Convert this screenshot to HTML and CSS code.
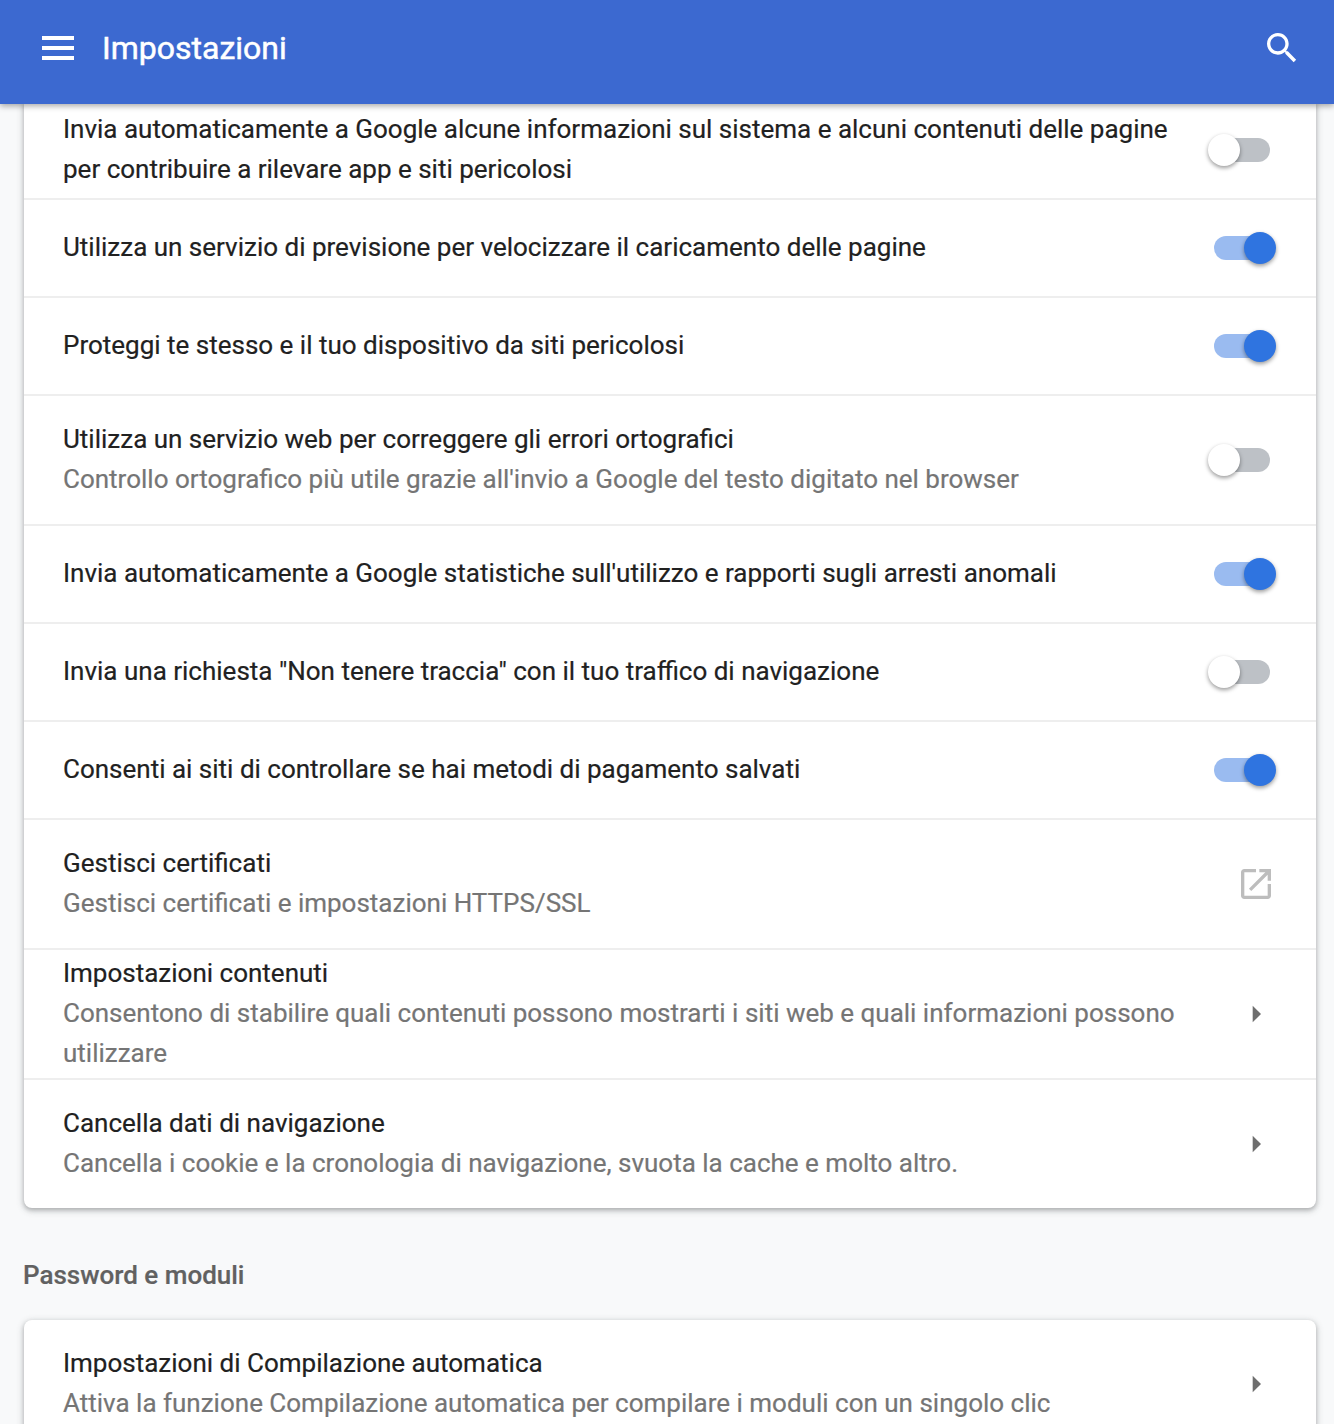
FILE: index.html
```html
<!DOCTYPE html>
<html lang="it">
<head>
<meta charset="utf-8">
<title>Impostazioni</title>
<link rel="stylesheet" href="styles.css">
</head>
<body>
<header class="topbar">
  <button class="menu" aria-label="Menu"><span></span><span></span><span></span></button>
  <h1 class="title">Impostazioni</h1>
  <svg class="icon search" viewBox="0 0 24 24"><path d="M15.5 14h-.79l-.28-.27C15.41 12.59 16 11.11 16 9.5 16 5.91 13.09 3 9.5 3S3 5.91 3 9.5 5.91 16 9.5 16c1.61 0 3.09-.59 4.23-1.57l.27.28v.79l5 4.99L20.49 19l-4.99-5zm-6 0C7.01 14 5 11.99 5 9.5S7.01 5 9.5 5 14 7.01 14 9.5 11.99 14 9.5 14z"/></svg>
</header>
<main class="page">
  <section class="card card-first">
    <div class="row row-first">
      <div class="text"><div class="label">Invia automaticamente a Google alcune informazioni sul sistema e alcuni contenuti delle pagine per contribuire a rilevare app e siti pericolosi</div></div>
      <div class="toggle"><span class="track"></span><span class="knob"></span></div>
    </div>
    <div class="row">
      <div class="text"><div class="label">Utilizza un servizio di previsione per velocizzare il caricamento delle pagine</div></div>
      <div class="toggle on"><span class="track"></span><span class="knob"></span></div>
    </div>
    <div class="row">
      <div class="text"><div class="label">Proteggi te stesso e il tuo dispositivo da siti pericolosi</div></div>
      <div class="toggle on"><span class="track"></span><span class="knob"></span></div>
    </div>
    <div class="row row-tall">
      <div class="text"><div class="label">Utilizza un servizio web per correggere gli errori ortografici</div><div class="sub">Controllo ortografico più utile grazie all'invio a Google del testo digitato nel browser</div></div>
      <div class="toggle"><span class="track"></span><span class="knob"></span></div>
    </div>
    <div class="row">
      <div class="text"><div class="label">Invia automaticamente a Google statistiche sull'utilizzo e rapporti sugli arresti anomali</div></div>
      <div class="toggle on"><span class="track"></span><span class="knob"></span></div>
    </div>
    <div class="row">
      <div class="text"><div class="label">Invia una richiesta "Non tenere traccia" con il tuo traffico di navigazione</div></div>
      <div class="toggle"><span class="track"></span><span class="knob"></span></div>
    </div>
    <div class="row">
      <div class="text"><div class="label">Consenti ai siti di controllare se hai metodi di pagamento salvati</div></div>
      <div class="toggle on"><span class="track"></span><span class="knob"></span></div>
    </div>
    <div class="row row-tall">
      <div class="text"><div class="label">Gestisci certificati</div><div class="sub">Gestisci certificati e impostazioni HTTPS/SSL</div></div>
      <svg class="icon external" viewBox="0 0 24 24"><path d="M19 19H5V5h7V3H5c-1.11 0-2 .9-2 2v14c0 1.1.89 2 2 2h14c1.1 0 2-.9 2-2v-7h-2v7zM14 3v2h3.59l-9.83 9.83 1.41 1.41L19 6.41V10h2V3h-7z"/></svg>
    </div>
    <div class="row row-tall">
      <div class="text"><div class="label">Impostazioni contenuti</div><div class="sub">Consentono di stabilire quali contenuti possono mostrarti i siti web e quali informazioni possono utilizzare</div></div>
      <svg class="icon arrow" viewBox="0 0 24 24"><path d="M10 17l5-5-5-5v10z"/></svg>
    </div>
    <div class="row row-tall">
      <div class="text"><div class="label">Cancella dati di navigazione</div><div class="sub">Cancella i cookie e la cronologia di navigazione, svuota la cache e molto altro.</div></div>
      <svg class="icon arrow" viewBox="0 0 24 24"><path d="M10 17l5-5-5-5v10z"/></svg>
    </div>
  </section>
  <h2 class="section-title">Password e moduli</h2>
  <section class="card">
    <div class="row row-tall row-top">
      <div class="text"><div class="label">Impostazioni di Compilazione automatica</div><div class="sub">Attiva la funzione Compilazione automatica per compilare i moduli con un singolo clic</div></div>
      <svg class="icon arrow" viewBox="0 0 24 24"><path d="M10 17l5-5-5-5v10z"/></svg>
    </div>
  </section>
</main>
</body>
</html>
```
FILE: styles.css
```css
* { box-sizing: border-box; }
html, body { margin: 0; padding: 0; height: 1424px; overflow: hidden; }
body {
  background: #f8f9fa;
  font-family: Roboto, "Liberation Sans", sans-serif;
  color: #212121;
  -webkit-text-stroke: 0.2px;
}
.topbar {
  position: relative;
  z-index: 2;
  height: 104px;
  background: #3c69d0;
  color: #fff;
  display: flex;
  align-items: center;
  padding: 0 32px 8px 42px;
  box-shadow: 0 2px 6px rgba(0, 0, 0, 0.35);
}
.menu {
  width: 32px;
  height: 24px;
  padding: 0;
  border: 0;
  background: none;
  display: flex;
  flex-direction: column;
  justify-content: space-between;
}
.menu span { display: block; height: 4px; background: #fff; }
.title {
  margin: 0 0 0 28px;
  flex: 1;
  font-size: 32px;
  font-weight: 400;
  line-height: 40px;
  -webkit-text-stroke: 0.5px;
}
.icon { width: 40px; height: 40px; flex: none; display: block; }
.search { fill: #fff; }
.external { fill: #bdbdbd; }
.arrow { fill: #6e6e6e; }
.page { padding: 0 18px 0 24px; margin-top: -2px; }
.card {
  background: #fff;
  border-radius: 8px;
  box-shadow: 0 2px 4px rgba(60, 64, 67, 0.3), 0 2px 6px 2px rgba(60, 64, 67, 0.15);
}
.card-first { border-radius: 0 0 8px 8px; }
.row {
  display: flex;
  align-items: center;
  min-height: 98px;
  padding: 0 40px 0 39px;
  border-top: 2px solid #eeeeee;
}
.row-first { border-top: 0; min-height: 96px; }
.row-tall { min-height: 130px; }
.row-top { border-top: 0; min-height: 128px; }
.text { flex: 1; min-width: 0; padding: 0 28px 2px 0; }
.label, .sub { font-size: 26px; line-height: 40px; }
.sub { color: #757575; }
.toggle { position: relative; width: 68px; height: 32px; flex: none; }
.track {
  position: absolute;
  left: 6px;
  right: 6px;
  top: 4px;
  height: 24px;
  border-radius: 12px;
  background: #bdc1c6;
}
.knob {
  position: absolute;
  left: 0;
  top: 0;
  width: 32px;
  height: 32px;
  border-radius: 50%;
  background: #fff;
  box-shadow: 0 2px 4px rgba(0, 0, 0, 0.4);
}
.toggle.on .track { background: #9abbf0; }
.toggle.on .knob { left: 36px; background: #2f74e0; }
.section-title {
  margin: 0 0 0 -1px;
  padding: 47px 0 25px;
  font-size: 26px;
  line-height: 40px;
  font-weight: 500;
  color: #616161;
}
```
